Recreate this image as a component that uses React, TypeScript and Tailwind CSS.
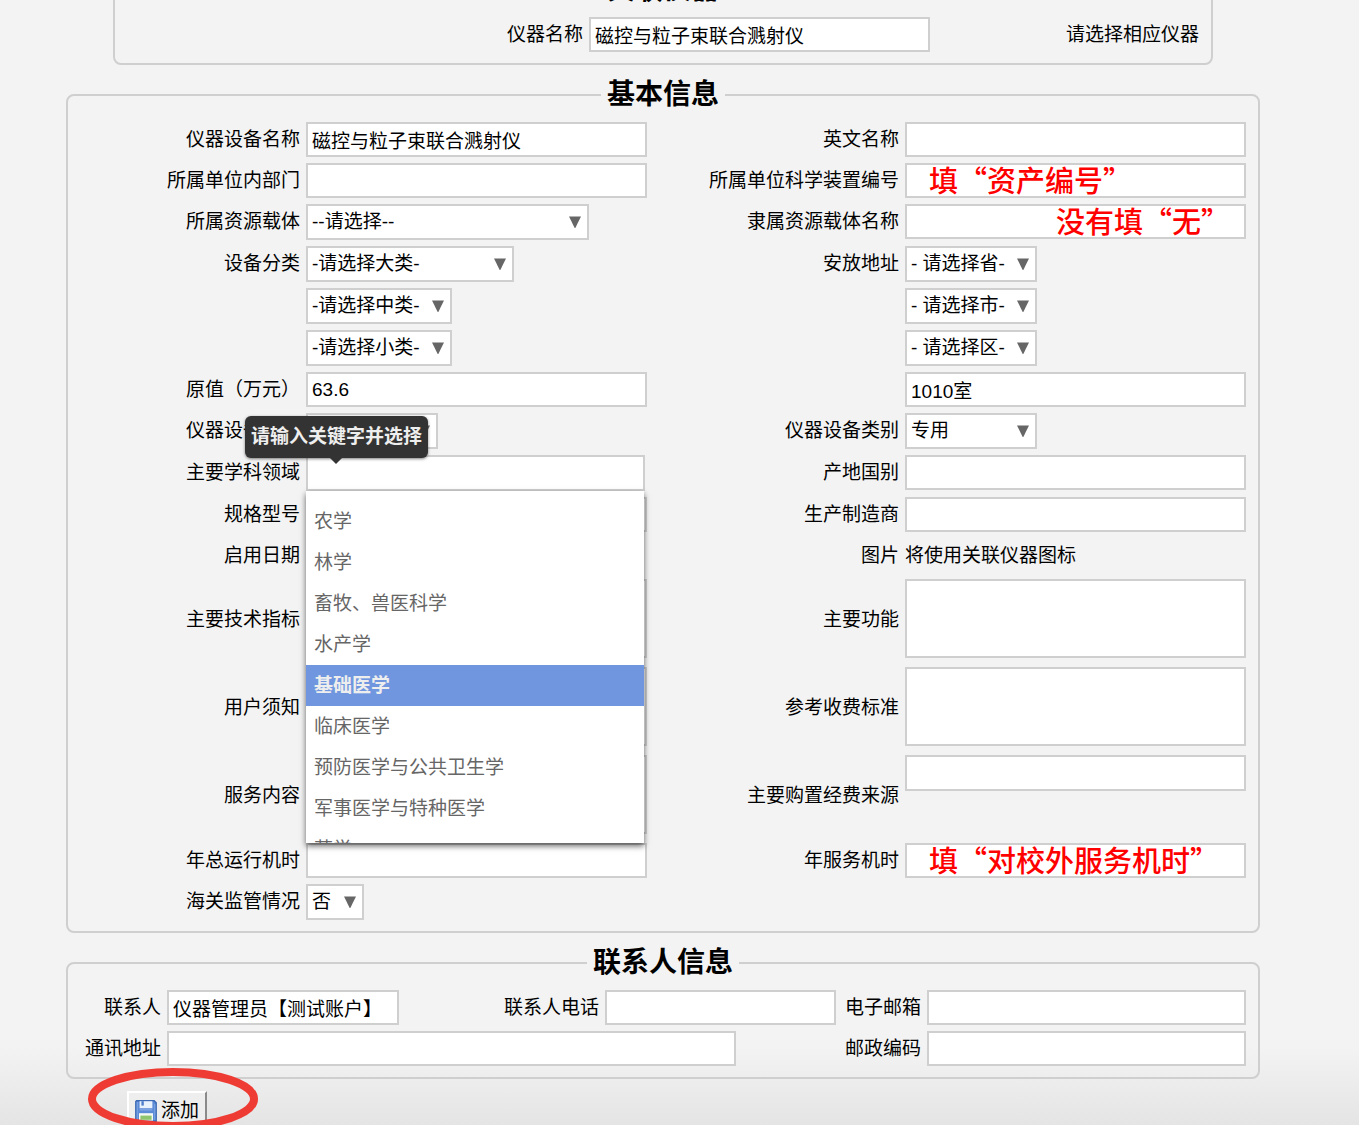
import React from "react";

const box = "block bg-white border-2 border-[#cfcfcf] pl-1 outline-none";

function Section({
  title,
  className = "",
  children,
}: {
  title: string;
  className?: string;
  children: React.ReactNode;
}) {
  return (
    <fieldset
      className={`min-w-0 rounded-lg border-2 border-[#cfcfcf] pt-[9px] pb-[11px] ${className}`}
    >
      <legend className="mx-auto px-1.5 text-[28px] leading-9 font-bold">{title}</legend>
      {children}
    </fieldset>
  );
}

function Label({ htmlFor, children }: { htmlFor: string; children: React.ReactNode }) {
  return (
    <label htmlFor={htmlFor} className="self-center pr-1.5 text-right whitespace-nowrap">
      {children}
    </label>
  );
}

function TextInput({
  id,
  value = "",
  width = "w-full",
  height = "h-[35px]",
  label,
}: {
  id: string;
  value?: string;
  width?: string;
  height?: string;
  label?: string;
}) {
  return (
    <input
      id={id}
      type="text"
      aria-label={label}
      defaultValue={value}
      className={`${box} ${height} ${width}`}
    />
  );
}

function Area({ id }: { id: string }) {
  return (
    <div className="h-[82px]">
      <textarea id={id} className={`${box} h-[79px] w-full resize-none`} />
    </div>
  );
}

function Select({
  id,
  option,
  width,
  label,
}: {
  id: string;
  option: string;
  width: string;
  label?: string;
}) {
  return (
    <div className={`relative ${width}`}>
      <select id={id} aria-label={label} className={`${box} h-9 w-full appearance-none`}>
        <option>{option}</option>
      </select>
      <svg
        viewBox="0 0 12 12"
        className="pointer-events-none absolute top-3 right-2 size-3 fill-[#666]"
        aria-hidden="true"
      >
        <path d="M0 .5h12L6.3 12h-.6z" />
      </svg>
    </div>
  );
}

function NotedInput({ id, note, noteClass }: { id: string; note: string; noteClass: string }) {
  return (
    <div className="relative">
      <TextInput id={id} />
      <span
        className={`pointer-events-none absolute top-0 font-['Noto_Sans_CJK_SC',sans-serif] text-[29px] leading-8 font-medium whitespace-nowrap text-[#f00] ${noteClass}`}
      >
        {note}
      </span>
    </div>
  );
}

const subjects = [
  "农学",
  "林学",
  "畜牧、兽医科学",
  "水产学",
  "基础医学",
  "临床医学",
  "预防医学与公共卫生学",
  "军事医学与特种医学",
  "药学",
];

function SubjectPicker() {
  return (
    <div className="relative">
      <TextInput id="subject" height="h-9" width="w-[339px]" />
      <div
        role="tooltip"
        className="absolute bottom-[33px] left-[-61px] z-30 rounded-md bg-[#333] px-1.5 text-[19px] leading-[42px] font-bold whitespace-nowrap text-[#eee] shadow-[0_1px_3px_rgba(0,0,0,0.5)]"
      >
        请输入关键字并选择
        <svg
          viewBox="0 0 12 6"
          className="absolute top-full left-[85px] h-1.5 w-3 fill-[#333]"
          aria-hidden="true"
        >
          <path d="M0 0h12L6 6z" />
        </svg>
      </div>
      <ul
        role="listbox"
        aria-label="主要学科领域"
        className="absolute top-full left-0 z-20 h-[352px] w-[338px] overflow-hidden bg-white pt-2.5 text-[#666] shadow-[0_3px_6px_rgba(0,0,0,0.6)]"
      >
        {subjects.map((s) => (
          <li
            key={s}
            role="option"
            aria-selected={s === "基础医学"}
            className="h-[41px] px-2 leading-[41px] aria-selected:bg-[#7096df] aria-selected:font-bold aria-selected:text-[#eee]"
          >
            {s}
          </li>
        ))}
      </ul>
    </div>
  );
}

function SaveIcon() {
  return (
    <svg viewBox="0 0 22 22" className="size-[22px] shrink-0" aria-hidden="true">
      <path d="M1.5.8h17.7l2 2v18.4H.8V1.5z" fill="#5b8ad6" stroke="#3c69b4" strokeWidth="1.4" />
      <path d="M2.2 2v18M19.8 4v16" stroke="#82a9e6" strokeWidth="1" />
      <path d="M4.6 1.2h12.8v7H4.6z" fill="#e9f1fc" />
      <path d="M6.4 1.2h2.4v4.4H6.4z" fill="#4f7fcb" />
      <path d="M4.6 8.2h12.8v2.4H4.6z" fill="#7ca2e2" />
      <path d="M4 13.2h14v7.4H4z" fill="#f5f9f2" />
      <path d="M5.4 15.6h11.2v4.2H5.4z" fill="#8dc46c" />
    </svg>
  );
}

export default function App() {
  return (
    <div className="min-h-screen overflow-hidden bg-[#f3f3f3] bg-[linear-gradient(to_top,#e4e4e4,#f3f3f3_80px)] font-['Liberation_Sans','Noto_Sans_CJK_SC',sans-serif] text-[19px] leading-7 text-black">
      <form className="-mt-7 flex flex-col gap-3 pr-[99px] pl-[66px]">
        <Section title="关联仪器" className="mx-[47px]">
          <div className="grid grid-cols-[474fr_341fr_281fr] items-center">
            <Label htmlFor="instrument">仪器名称</Label>
            <TextInput id="instrument" value="磁控与粒子束联合溅射仪" />
            <span className="pr-3 text-right">请选择相应仪器</span>
          </div>
        </Section>

        <Section title="基本信息">
          <div className="grid grid-cols-[238fr_341fr_258fr_341fr] items-start gap-y-1.5 pr-3">
            <Label htmlFor="name">仪器设备名称</Label>
            <TextInput id="name" value="磁控与粒子束联合溅射仪" />
            <Label htmlFor="en-name">英文名称</Label>
            <TextInput id="en-name" />

            <Label htmlFor="dept">所属单位内部门</Label>
            <TextInput id="dept" />
            <Label htmlFor="asset">所属单位科学装置编号</Label>
            <NotedInput id="asset" note="填“资产编号”" noteClass="left-6" />

            <Label htmlFor="carrier">所属资源载体</Label>
            <Select id="carrier" option="--请选择--" width="w-[283px]" />
            <Label htmlFor="carrier-name">隶属资源载体名称</Label>
            <NotedInput id="carrier-name" note="没有填“无”" noteClass="right-4" />

            <Label htmlFor="category">设备分类</Label>
            <Select id="category" option="-请选择大类-" width="w-[208px]" />
            <Label htmlFor="province">安放地址</Label>
            <Select id="province" option="- 请选择省-" width="w-[132px]" />

            <div className="col-start-2">
              <Select id="category-mid" label="中类" option="-请选择中类-" width="w-[146px]" />
            </div>
            <div className="col-start-4">
              <Select id="city" label="市" option="- 请选择市-" width="w-[132px]" />
            </div>

            <div className="col-start-2">
              <Select id="category-sub" label="小类" option="-请选择小类-" width="w-[146px]" />
            </div>
            <div className="col-start-4">
              <Select id="district" label="区" option="- 请选择区-" width="w-[132px]" />
            </div>

            <Label htmlFor="price">原值（万元）</Label>
            <TextInput id="price" value="63.6" />
            <div className="col-start-4">
              <TextInput id="room" label="房间" value="1010室" />
            </div>

            <Label htmlFor="source">仪器设备来源</Label>
            <Select id="source" option="购置" width="w-[132px]" />
            <Label htmlFor="kind">仪器设备类别</Label>
            <Select id="kind" option="专用" width="w-[132px]" />

            <Label htmlFor="subject">主要学科领域</Label>
            <SubjectPicker />
            <Label htmlFor="country">产地国别</Label>
            <TextInput id="country" />

            <Label htmlFor="model">规格型号</Label>
            <TextInput id="model" />
            <Label htmlFor="maker">生产制造商</Label>
            <TextInput id="maker" />

            <Label htmlFor="start-date">启用日期</Label>
            <TextInput id="start-date" width="w-[200px]" />
            <span className="self-center pr-1.5 text-right">图片</span>
            <span className="self-center">将使用关联仪器图标</span>

            <Label htmlFor="specs">主要技术指标</Label>
            <Area id="specs" />
            <Label htmlFor="functions">主要功能</Label>
            <Area id="functions" />

            <Label htmlFor="notice">用户须知</Label>
            <Area id="notice" />
            <Label htmlFor="fees">参考收费标准</Label>
            <Area id="fees" />

            <Label htmlFor="services">服务内容</Label>
            <Area id="services" />
            <Label htmlFor="funding">主要购置经费来源</Label>
            <TextInput id="funding" height="h-9" />

            <Label htmlFor="run-hours">年总运行机时</Label>
            <TextInput id="run-hours" />
            <Label htmlFor="service-hours">年服务机时</Label>
            <NotedInput id="service-hours" note="填“对校外服务机时”" noteClass="left-6" />

            <Label htmlFor="customs">海关监管情况</Label>
            <Select id="customs" option="否" width="w-[58px]" />
          </div>
        </Section>

        <Section title="联系人信息">
          <div className="grid grid-cols-[99fr_232fr_206fr_231fr_91fr_319fr] items-start gap-y-1.5 pr-3">
            <Label htmlFor="contact">联系人</Label>
            <TextInput id="contact" value="仪器管理员【测试账户】" />
            <Label htmlFor="phone">联系人电话</Label>
            <TextInput id="phone" />
            <Label htmlFor="email">电子邮箱</Label>
            <TextInput id="email" />

            <Label htmlFor="address">通讯地址</Label>
            <div className="col-span-3">
              <TextInput id="address" width="w-[85%]" />
            </div>
            <Label htmlFor="postcode">邮政编码</Label>
            <TextInput id="postcode" />
          </div>
        </Section>

        <div className="relative ml-[61px] w-fit">
          <button
            type="button"
            className="flex h-9 items-center gap-1 border-2 border-t-white border-r-[#8a8a8a] border-b-[#8a8a8a] border-l-white bg-[#eee] px-1.5 pt-1"
          >
            <SaveIcon />
            添加
          </button>
          <svg
            viewBox="0 0 172 64"
            className="pointer-events-none absolute -top-6 -left-10 h-16 w-[172px]"
            aria-hidden="true"
          >
            <ellipse
              cx="86"
              cy="32"
              rx="81"
              ry="27"
              fill="none"
              stroke="#ee3b33"
              strokeWidth="8"
            />
          </svg>
        </div>
      </form>
    </div>
  );
}
